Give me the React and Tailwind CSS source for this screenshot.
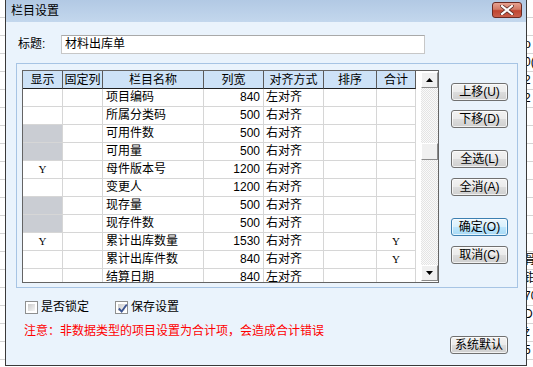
import React from 'react';

const rows = [
  { show: '', gray: false, name: '项目编码', width: 840, align: '左对齐', sum: '' },
  { show: '', gray: false, name: '所属分类码', width: 500, align: '右对齐', sum: '' },
  { show: '', gray: true, name: '可用件数', width: 500, align: '右对齐', sum: '' },
  { show: '', gray: true, name: '可用量', width: 500, align: '右对齐', sum: '' },
  { show: 'Y', gray: false, name: '母件版本号', width: 1200, align: '右对齐', sum: '' },
  { show: '', gray: false, name: '变更人', width: 1200, align: '右对齐', sum: '' },
  { show: '', gray: true, name: '现存量', width: 500, align: '右对齐', sum: '' },
  { show: '', gray: true, name: '现存件数', width: 500, align: '右对齐', sum: '' },
  { show: 'Y', gray: false, name: '累计出库数量', width: 1530, align: '右对齐', sum: 'Y' },
  { show: '', gray: false, name: '累计出库件数', width: 840, align: '右对齐', sum: 'Y' },
  { show: '', gray: false, name: '结算日期', width: 840, align: '左对齐', sum: '' },
];

const headers = ['显示', '固定列', '栏目名称', '列宽', '对齐方式', '排序', '合计'];

const cols = 'grid-cols-[40px_40px_101px_60px_60px_53px_39px]';

function WinButton({ children, focused, className = '' }) {
  return (
    <button
      type="button"
      className={`h-[18px] w-[57px] rounded-[3px] border text-[12px] leading-[16px] text-black shadow-[inset_0_0_0_1px_rgba(255,255,255,0.7)] ${
        focused
          ? 'border-[#3c7fb1] bg-[linear-gradient(#eaf6fd_0%,#d9f0fc_50%,#bee6fd_50%,#a7d9f5_100%)]'
          : 'border-[#707070] bg-[linear-gradient(#f2f2f2_0%,#ebebeb_50%,#dddddd_50%,#cfcfcf_100%)]'
      } ${className}`}
    >
      {children}
    </button>
  );
}

function Checkbox({ checked }) {
  return (
    <div className="w-[13px] h-[13px] border border-[#8e8f8f] bg-white p-[2px] flex">
      <div className="flex-1 bg-[linear-gradient(135deg,#cbcbcb,#f6f6f6)] relative">
        {checked && (
          <svg viewBox="0 0 9 9" className="absolute -left-[1px] -top-[1px] w-[11px] h-[11px]">
            <path d="M1.5 4.5 L3.8 7 L8 1.2" fill="none" stroke="#3d5592" strokeWidth="1.6" />
          </svg>
        )}
      </div>
    </div>
  );
}

function ScrollBtn({ up }) {
  return (
    <div className="h-[16px] flex items-center justify-center bg-[#f0f0f0] border border-t-white border-l-white border-r-[#8a8a8a] border-b-[#8a8a8a]">
      <svg viewBox="0 0 7 4" className="w-[7px] h-[4px]">
        {up ? <path d="M3.5 0 L7 4 L0 4 Z" fill="#000" /> : <path d="M0 0 L7 0 L3.5 4 Z" fill="#000" />}
      </svg>
    </div>
  );
}

const rightText = ['', '', 'ρ', '0(', '2', '2', '', '', '', '', '', '', '', '·', '骨', '钳', '70', 'DI', 'ż', '5'];

export default function App() {
  return (
    <div className="w-[533px] h-[367px] flex bg-white overflow-hidden font-['Liberation_Sans','Noto_Sans_CJK_SC',sans-serif] text-[12px] text-black">
      {/* sheet behind, left */}
      <div className="w-[5px] h-full shrink-0 bg-[repeating-linear-gradient(#ffffff_0px,#ffffff_17px,#d4d4d4_17px,#d4d4d4_18px)]" />

      {/* dialog */}
      <div className="w-[522px] h-[366px] shrink-0 flex flex-col border-x border-b border-[#3a3a3a]">
        {/* title bar */}
        <div className="h-[22px] flex items-center justify-between bg-[linear-gradient(#b2c9e4,#c3d7ed)]">
          <span className="pl-[5px] text-[12px] leading-[14px] text-black">栏目设置</span>
          <div className="mr-[4px] mt-[-3px] w-[30px] h-[16px] rounded-[3px] border border-[#6b2a22] bg-[linear-gradient(#e8a291_0%,#d27a66_45%,#c0442f_55%,#c9604c_100%)] flex items-center justify-center">
            <svg viewBox="0 0 14 10" className="w-[14px] h-[10px]">
              <path d="M2 1 L12 9 M12 1 L2 9" stroke="#5a2a24" strokeWidth="3.6" strokeLinecap="square" />
              <path d="M2 1 L12 9 M12 1 L2 9" stroke="#ffffff" strokeWidth="2.2" strokeLinecap="square" />
            </svg>
          </div>
        </div>

        {/* body */}
        <div className="flex-1 bg-[#eaf3fc] flex flex-col">
          {/* title row */}
          <div className="mt-[13px] flex items-center">
            <span className="w-[55px] pl-[12px] leading-[19px]">标题:</span>
            <div className="w-[364px] h-[19px] bg-white border border-[#c7c7c7] border-t-[#a9a9a9] pl-[3px] leading-[17px]">
              材料出库单
            </div>
          </div>

          {/* group box */}
          <div className="mt-[9px] ml-[10px] w-[502px] h-[225px] border border-[#a7c4e4] flex items-start">
            {/* table */}
            <div className="ml-[5px] mt-[6px] w-[417px] h-[213px] border border-[#646464] bg-white flex">
              <div className="w-[398px] h-full overflow-hidden">
                <div className={`grid ${cols} h-[18px]`}>
                  {headers.map((h) => (
                    <div
                      key={h}
                      className="h-[18px] bg-[#cde2f7] border-r border-r-[#5a5a5a] border-b border-b-[#202020] flex items-center justify-center leading-[16px]"
                    >
                      {h}
                    </div>
                  ))}
                </div>
                {rows.map((r) => (
                  <div key={r.name} className={`grid ${cols} h-[18px]`}>
                    <div
                      className={`h-[18px] border-r border-b border-[#d6d6d6] flex items-center justify-center font-['Liberation_Serif',serif] text-[11px] ${
                        r.gray ? 'bg-[#cacdd3]' : ''
                      }`}
                    >
                      {r.show}
                    </div>
                    <div className="h-[18px] border-r border-b border-[#d6d6d6]" />
                    <div className="h-[18px] border-r border-b border-[#d6d6d6] pl-[3px] leading-[17px] whitespace-nowrap">
                      {r.name}
                    </div>
                    <div className="h-[18px] border-r border-b border-[#d6d6d6] pr-[3px] text-right leading-[17px]">
                      {r.width}
                    </div>
                    <div className="h-[18px] border-r border-b border-[#d6d6d6] pl-[2px] leading-[17px]">
                      {r.align}
                    </div>
                    <div className="h-[18px] border-r border-b border-[#d6d6d6]" />
                    <div className="h-[18px] border-r border-b border-[#d6d6d6] flex items-center justify-center font-['Liberation_Serif',serif] text-[11px]">
                      {r.sum}
                    </div>
                  </div>
                ))}
              </div>

              {/* scrollbar */}
              <div className="w-[17px] h-full py-[1px] flex flex-col">
                <ScrollBtn up />
                <div className="flex-1 bg-[repeating-conic-gradient(#e4e4e4_0_25%,#fafafa_0_50%)] bg-[length:2px_2px]">
                  <div className="mt-[55px] h-[17px] bg-[#f0f0f0] border border-t-white border-l-white border-r-[#8a8a8a] border-b-[#8a8a8a]" />
                </div>
                <ScrollBtn />
              </div>
            </div>

            {/* side buttons */}
            <div className="ml-[12px] mt-[19px] flex flex-col">
              <WinButton>上移(U)</WinButton>
              <WinButton className="mt-[9px]">下移(D)</WinButton>
              <WinButton className="mt-[22px]">全选(L)</WinButton>
              <WinButton className="mt-[10px]">全消(A)</WinButton>
              <WinButton focused className="mt-[22px]">确定(O)</WinButton>
              <WinButton className="mt-[10px]">取消(C)</WinButton>
            </div>
          </div>

          {/* options */}
          <div className="mt-[13px] ml-[19px] h-[13px] flex items-center">
            <Checkbox />
            <span className="ml-[3px] leading-[13px]">是否锁定</span>
            <div className="ml-[26px]">
              <Checkbox checked />
            </div>
            <span className="ml-[3px] leading-[13px]">保存设置</span>
          </div>

          <div className="flex items-start justify-between">
            <span className="mt-[10px] ml-[18px] text-[#ff0000] leading-[14px]">
              注意：非数据类型的项目设置为合计项，会造成合计错误
            </span>
            <WinButton className="mt-[22px] mr-[18px] w-[58px]">系统默认</WinButton>
          </div>
        </div>
      </div>

      {/* sheet behind, right */}
      <div className="w-[6px] h-full shrink-0 overflow-hidden">
        <div className="ml-[-3px] w-[30px]">
          {rightText.map((t, i) => (
            <div key={i} className="h-[18px] border-b border-[#d4d4d4] leading-[17px] whitespace-nowrap">
              {t}
            </div>
          ))}
        </div>
      </div>
    </div>
  );
}
